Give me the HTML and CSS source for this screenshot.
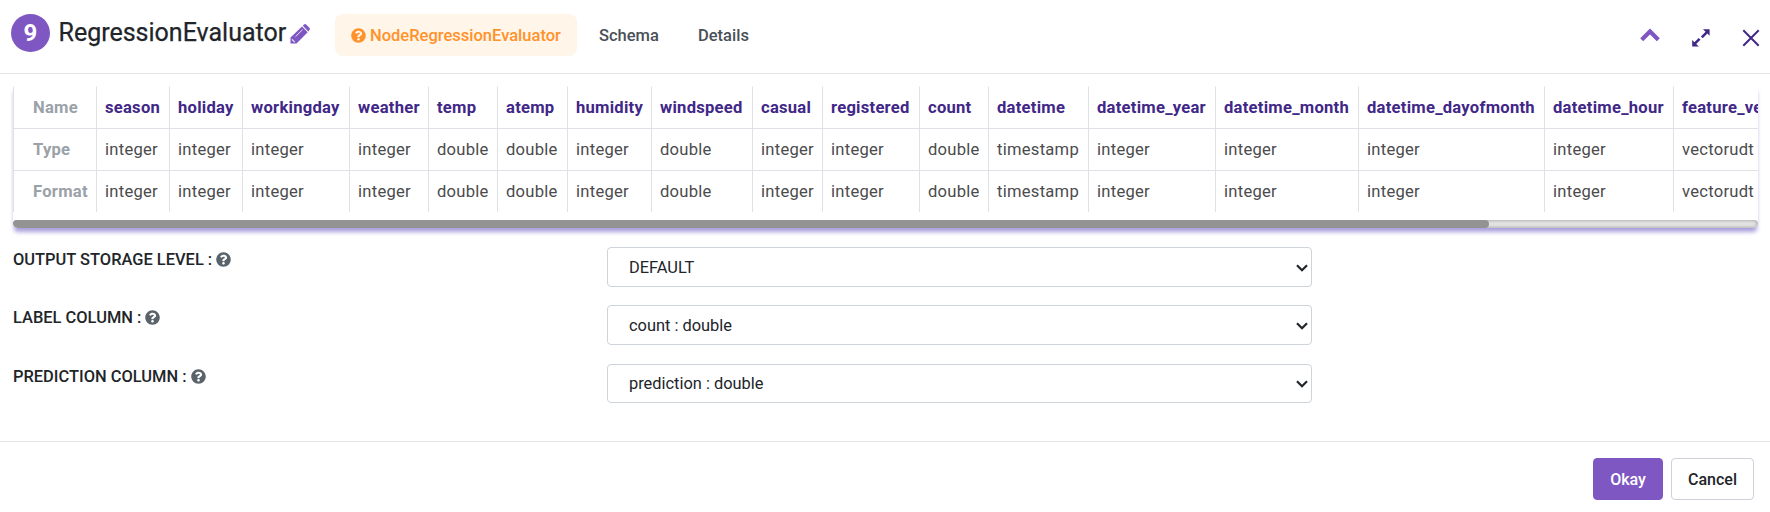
FILE: index.html
```
<!DOCTYPE html>
<html lang="en">
<head>
<meta charset="utf-8">
<title>RegressionEvaluator</title>
<link rel="stylesheet" href="styles.css">
</head>
<body>
<svg class="defs" aria-hidden="true">
  <symbol id="help" viewBox="0 0 512 512"><path fill="currentColor" d="M504 256c0 137-111 248-248 248S8 393 8 256 119 8 256 8s248 111 248 248zM262.700 90c-54.500 0-89.300 23-116.500 63.800-3.500 5.300-2.400 12.400 2.700 16.300l34.700 26.300c5.200 3.900 12.600 3 16.700-2.100 17.900-22.700 30.100-35.800 57.300-35.800 20.400 0 45.700 13.100 45.700 33 0 15-12.400 22.700-32.500 34C247.100 238.500 216 255 216 296v4c0 6.600 5.400 12 12 12h56c6.600 0 12-5.400 12-12v-1.300c0-28.700 84-29.900 84-107.700 0-58.500-60.700-101-117.300-101zM256 338c-25.400 0-46 20.600-46 46s20.600 46 46 46 46-20.600 46-46-20.600-46-46-46z"/></symbol>
  <symbol id="arrow" viewBox="0 0 12 8"><path fill="none" stroke="currentColor" stroke-width="2.200" d="M1 1.300 6 6.300l5-5"/></symbol>
</svg>
<header class="header">
  <span class="badge">9</span>
  <h1 class="title">RegressionEvaluator</h1>
  <svg class="pencil" viewBox="0 0 20 20"><path d="M.5 13.500 12 2.500l5.700 5.700L6.500 19.500h-6z"/><path d="M12.800 1.700 14 .6q1.200-1 2.400.1l3 3q1 1.200 0 2.400l-1.100 1.300z"/><path class="cut" d="M5.500 12.600 12.600 5.600M2.200 15v1.300h1.500v1.500h1.400"/></svg>
  <nav class="tabs">
    <a class="tab active"><svg class="icon"><use href="#help"/></svg>NodeRegressionEvaluator</a>
    <a class="tab schema">Schema</a>
    <a class="tab">Details</a>
  </nav>
  <div class="tools">
    <svg class="tool up" viewBox="0 0 20 14"><path d="M1.700 11.700 10 3.500l8.300 8.200"/></svg>
    <svg class="tool expand" viewBox="0 0 18 18"><path d="M11 .2h6.600v6.600l-2.200-2.200-4.700 4.700-1.800-1.800 4.700-4.700zM6.800 17.600H.2V11l2.200 2.200 4.300-4.300 1.800 1.800-4.300 4.300z"/></svg>
    <svg class="tool close" viewBox="0 0 18 18"><path d="m1.300 1.300 15.400 15.400M16.700 1.300 1.300 16.700"/></svg>
  </div>
</header>
<main class="content">
  <section class="schema-box">
    <table class="grid">
      <colgroup><col class="w83"><col class="w73"><col class="w73"><col class="w107"><col class="w79"><col class="w69"><col class="w70"><col class="w84"><col class="w101"><col class="w70"><col class="w97"><col class="w69"><col class="w100"><col class="w127"><col class="w143"><col class="w186"><col class="w129"><col class="w127"></colgroup>
      <tr class="names"><th>Name</th><td>season</td><td>holiday</td><td>workingday</td><td>weather</td><td>temp</td><td>atemp</td><td>humidity</td><td>windspeed</td><td>casual</td><td>registered</td><td>count</td><td>datetime</td><td>datetime_year</td><td>datetime_month</td><td>datetime_dayofmonth</td><td>datetime_hour</td><td>feature_vector</td></tr>
      <tr><th>Type</th><td>integer</td><td>integer</td><td>integer</td><td>integer</td><td>double</td><td>double</td><td>integer</td><td>double</td><td>integer</td><td>integer</td><td>double</td><td>timestamp</td><td>integer</td><td>integer</td><td>integer</td><td>integer</td><td>vectorudt</td></tr>
      <tr><th>Format</th><td>integer</td><td>integer</td><td>integer</td><td>integer</td><td>double</td><td>double</td><td>integer</td><td>double</td><td>integer</td><td>integer</td><td>double</td><td>timestamp</td><td>integer</td><td>integer</td><td>integer</td><td>integer</td><td>vectorudt</td></tr>
    </table>
    <div class="track"><div class="thumb"></div></div>
  </section>
  <form class="form">
    <div class="row"><label>OUTPUT STORAGE LEVEL : <svg class="icon"><use href="#help"/></svg></label><div class="select"><span>DEFAULT</span><svg class="arrow"><use href="#arrow"/></svg></div></div>
    <div class="row"><label>LABEL COLUMN : <svg class="icon"><use href="#help"/></svg></label><div class="select"><span>count : double</span><svg class="arrow"><use href="#arrow"/></svg></div></div>
    <div class="row last"><label>PREDICTION COLUMN : <svg class="icon"><use href="#help"/></svg></label><div class="select"><span>prediction : double</span><svg class="arrow"><use href="#arrow"/></svg></div></div>
  </form>
</main>
<footer class="footer"><button class="btn primary">Okay</button><button class="btn">Cancel</button></footer>
</body>
</html>
```
FILE: styles.css
```
* { box-sizing: border-box; }
body { margin: 0; height: 512px; overflow: hidden; background: #fff; color: #212529; font: 16px/24px Roboto, sans-serif; display: flex; flex-direction: column; }
.defs { display: none; }
.header { height: 74px; flex: none; display: flex; align-items: flex-start; border-bottom: 1px solid #e5e5e8; padding-left: 11px; }
.badge { width: 39px; height: 38px; margin-top: 14px; border-radius: 50%; background: #7e57c2; color: #fff; font-weight: 700; font-size: 24px; line-height: 38px; text-align: center; }
.title { margin: 17px 0 0 8px; width: 232px; font-size: 25px; line-height: 32px; font-weight: 400; white-space: nowrap; text-indent: .5px; -webkit-text-stroke: .25px #212529; }
.pencil { width: 20px; height: 20px; margin-top: 24px; fill: #7e57c2; }
.pencil .cut { fill: none; stroke: #fff; stroke-width: .8; }
.tabs { display: flex; margin: 14px 0 0 25px; }
.tab { height: 42px; line-height: 43px; font-size: 16.5px; font-weight: 500; color: #495057; white-space: nowrap; }
.tab.active { width: 242px; padding-left: 16px; margin-right: 22px; border-radius: 8px; background: #fff5e8; color: #ff922b; }
.tab.schema { width: 99px; }
.icon { width: 15px; height: 15px; vertical-align: -2px; }
.tab .icon { margin-right: 4px; }
.tools { margin-left: auto; padding-right: 10px; display: flex; }
.tool { fill: none; }
.up { width: 20px; height: 14px; margin: 28px 32px 0 0; stroke: #7e57c2; stroke-width: 4.2; }
.expand { width: 18px; height: 18px; margin: 29px 32px 0 0; fill: #412787; }
.close { width: 18px; height: 18px; margin-top: 29px; stroke: #412787; stroke-width: 2; }
.content { flex: 1; padding: 12px 12px 0 13px; }
.schema-box { height: 142px; overflow: hidden; border-radius: 0 0 5px 5px; box-shadow: 0 5px 4px -1px #aaa0dc; }
.grid { table-layout: fixed; width: 1787px; border-spacing: 0; color: #495057; font-size: 16.6px; letter-spacing: .25px; }
.grid tr { height: 42px; }
.grid th, .grid td { height: 42px; padding: 0 0 0 8px; border-left: 1px solid #dee2e6; border-top: 1px solid #dee2e6; text-align: left; white-space: nowrap; }
.grid td { color: #4b4b4d; }
.grid th { padding-left: 19px; color: #9ba1a8; font-weight: 700; }
.grid .names th, .grid .names td { border-top-color: transparent; }
.grid .names td { color: #412787; font-weight: 700; }
.w69 { width: 69px; } .w70 { width: 70px; } .w73 { width: 73px; } .w79 { width: 79px; }
.w83 { width: 83px; } .w84 { width: 84px; } .w97 { width: 97px; } .w100 { width: 100px; }
.w101 { width: 101px; } .w107 { width: 107px; } .w127 { width: 127px; } .w129 { width: 129px; }
.w143 { width: 143px; } .w186 { width: 186px; }
.track { margin-top: 8px; height: 8px; border-radius: 5px; background: #e8e8e8; box-shadow: inset 0 0 4px #909090; }
.thumb { width: 1476px; height: 8px; border-radius: 5px; background: #939393; }
.form { padding-top: 19px; }
.row { display: grid; grid-template-columns: 594px 705px; height: 58px; align-items: start; }
.row label { padding-top: 1px; font-size: 16.450px; font-weight: 500; white-space: nowrap; }
.row .icon { color: #5a626a; }
.select { height: 40px; padding: 1px 3px 0 21px; border: 1px solid #ced4da; border-radius: 4px; display: flex; align-items: center; justify-content: space-between; font-size: 16.400px; }
.arrow { width: 12px; height: 8px; }
.row.last { padding-top: 1px; }
.row.last .select { height: 39px; }
.footer { flex: none; height: 71px; border-top: 1px solid #e5e5e8; padding: 16px 16px 0 0; display: flex; justify-content: flex-end; gap: 8px; }
.btn { height: 42px; width: 83px; padding: 0; border: 1px solid #ced0da; border-radius: 4px; background: #fff; color: #212529; font: 500 16px Roboto, sans-serif; }
.primary { width: 70px; border-color: #7e57c2; background: #7e57c2; color: #fff; }
```
